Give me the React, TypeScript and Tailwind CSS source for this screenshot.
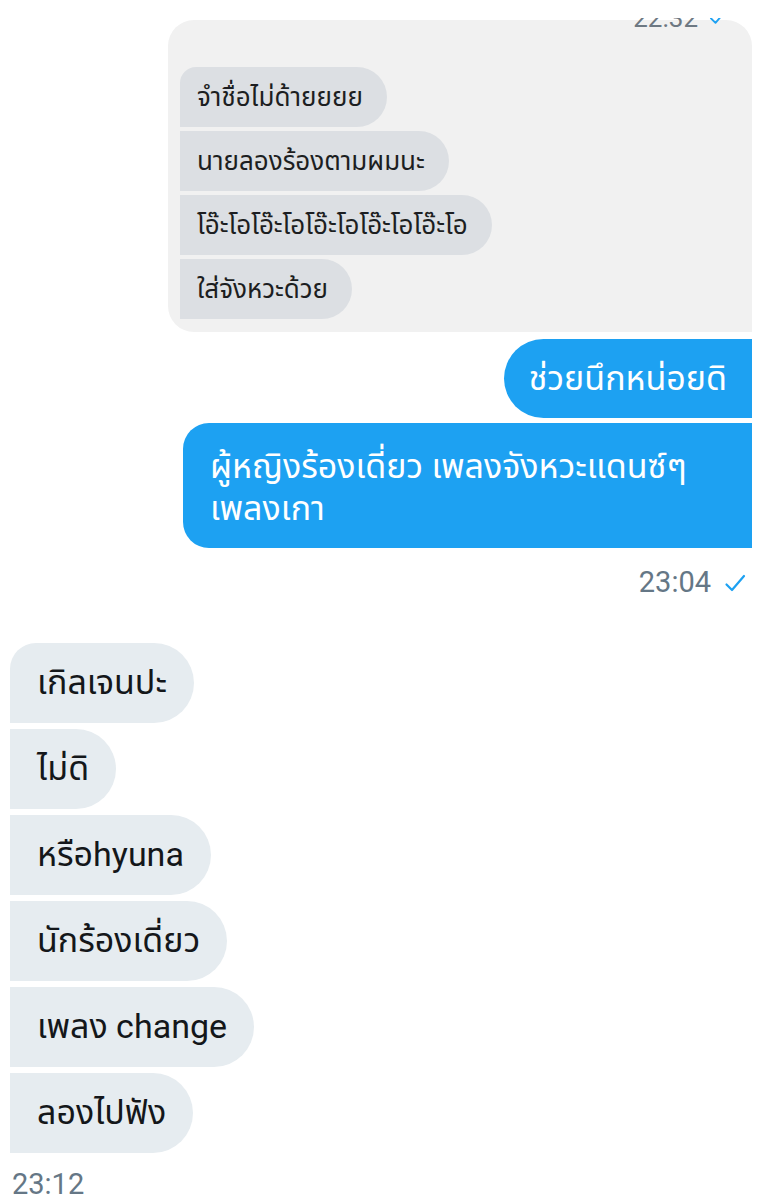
const font = "font-['Roboto','Noto_Sans_Thai','Noto_Sans',sans-serif]"

const Tick = ({ className }: { className?: string }) => (
  <svg viewBox="0 0 24 24" fill="none" stroke="currentColor" strokeWidth={2.2} strokeLinecap="round" strokeLinejoin="round" className={className}>
    <path d="M3.5 13.5l5.5 5.5L21 5" />
  </svg>
)

const quoted = ['จำชื่อไม่ด้ายยยย', 'นายลองร้องตามผมนะ', 'โอ๊ะโอโอ๊ะโอโอ๊ะโอโอ๊ะโอโอ๊ะโอ', 'ใส่จังหวะด้วย']
const incoming = ['เกิลเจนปะ', 'ไม่ดิ', 'หรือhyuna', 'นักร้องเดี่ยว', 'เพลง change', 'ลองไปฟัง']

export default function App() {
  return (
    <div className={`w-[777px] h-[1200px] overflow-hidden bg-white flex flex-col ${font}`}>
      {/* quoted screenshot */}
      <div className="pl-[168px] pr-[25px] pt-[20px]">
        <div className="relative bg-[#f1f1f1] rounded-tl-[26px] rounded-tr-[26px] rounded-bl-[26px] pt-[47px] pb-[13px] pl-[12px] flex flex-col items-start gap-[4px]">
          <div className="absolute -top-[2px] right-[24px] h-[9px] overflow-hidden flex items-start gap-[10px]">
            <div className="-mt-[13px] text-[26px] leading-none text-[#6d7882]">22:32</div>
            <Tick className="w-[20px] h-[20px] -mt-[11px] text-[#1da1f2]" />
          </div>
          {quoted.map((t, i) => (
            <div
              key={t}
              className={`h-[60px] flex items-center bg-[#dcdfe3] pl-[17px] pr-[24px] rounded-r-[30px] text-[26px] text-[#1c1e21] ${i === 0 ? 'rounded-tl-[16px]' : ''}`}
            >
              {t}
            </div>
          ))}
        </div>
      </div>

      {/* outgoing */}
      <div className="flex flex-col items-end pr-[25px] mt-[7px] gap-[5px]">
        <div className="h-[79px] flex items-center bg-[#1da1f2] text-white text-[34px] pl-[25px] pr-[25px] rounded-l-[40px]">
          ช่วยนึกหน่อยดิ
        </div>
        <div className="w-[569px] h-[125px] bg-[#1da1f2] text-white text-[34px] leading-[42px] pl-[27px] pr-[20px] pt-[22px] rounded-l-[26px]">
          ผู้หญิงร้องเดี่ยว เพลงจังหวะแดนซ์ๆ เพลงเกา
        </div>
      </div>
      <div className="flex items-center justify-end gap-[12px] pr-[30px] mt-[13px] text-[29px] text-[#657786]">
        <span>23:04</span>
        <Tick className="w-[24px] h-[24px] text-[#1da1f2]" />
      </div>

      {/* incoming */}
      <div className="flex flex-col items-start gap-[6px] pl-[10px] mt-[38px]">
        {incoming.map((t, i) => (
          <div
            key={t}
            className={`h-[80px] flex items-center bg-[#e6ecf0] text-[34px] text-[#14171a] pl-[27px] pr-[27px] rounded-r-[40px] ${i === 0 ? 'rounded-tl-[26px]' : ''}`}
          >
            {t}
          </div>
        ))}
      </div>
      <div className="pl-[12px] mt-[10px] text-[29px] text-[#657786]">23:12</div>
    </div>
  )
}
